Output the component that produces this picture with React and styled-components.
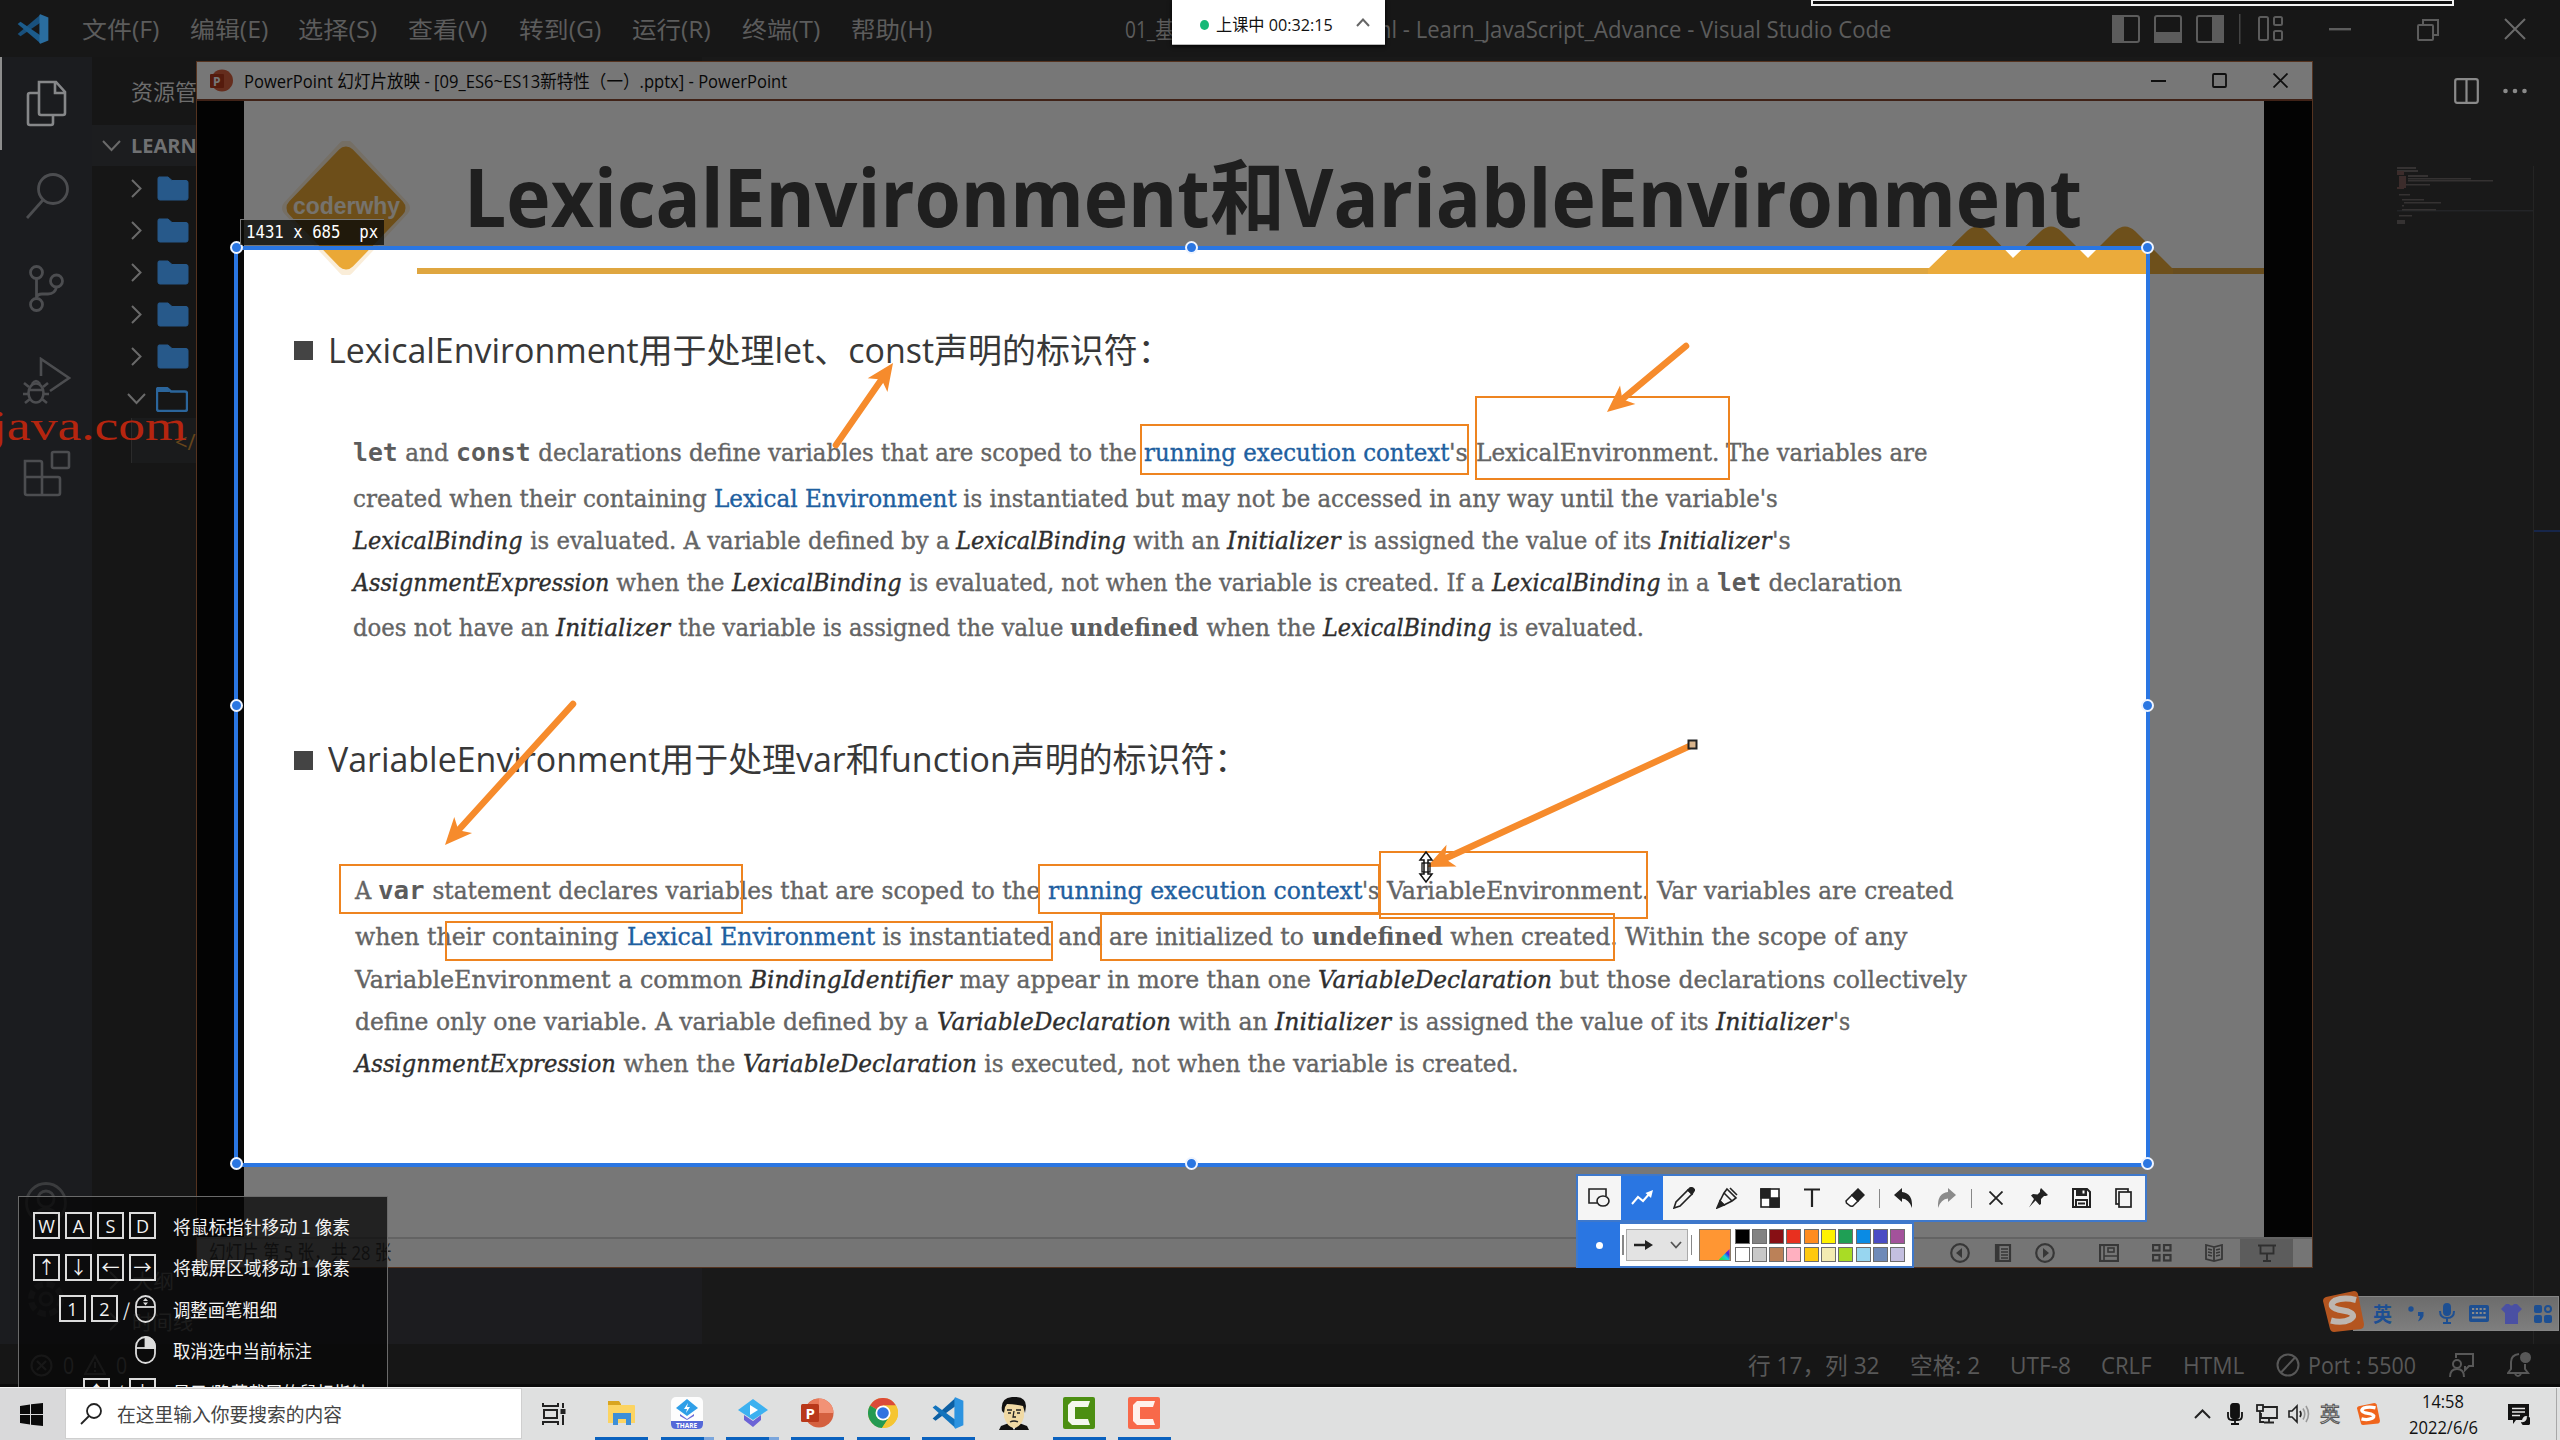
import React, { useLayoutEffect, useRef, useState } from "react";
import styled, { createGlobalStyle } from "styled-components";

const SANS = '"Open Sans", "Noto Sans CJK SC", sans-serif';
const CJK = '"Noto Sans CJK SC", "Open Sans", sans-serif';
const SERIF = '"DejaVu Serif Condensed", "DejaVu Serif", serif';
const MONO = '"DejaVu Sans Mono", monospace';
const BLUE = "#2a76e2";
const ORANGE = "#f68b2c";

const Global = createGlobalStyle`
  * { box-sizing: border-box; }
  html, body { margin: 0; padding: 0; background: #171717; }
  body { font-family: ${SANS}; overflow: hidden; }
  svg { display: block; flex: none; }
`;

/* ---------- text that fills an exact advance ---------- */
const FitBox = styled.span`
  display: block;
  flex: none;
  width: ${(p) => p.$w}px;
  margin-left: ${(p) => p.$ml || 0}px;
  white-space: pre;
`;
const FitText = styled.span`
  display: inline-block;
  transform-origin: 0 50%;
  white-space: pre;
`;
function Fit({ w, ml, children, as: Tag = FitBox }) {
  const ref = useRef(null);
  const [scale, setScale] = useState(1);
  useLayoutEffect(() => {
    setScale(w / ref.current.offsetWidth);
  }, [w]);
  return (
    <Tag $w={w} $ml={ml}>
      <FitText ref={ref} style={{ transform: `scaleX(${scale})` }}>{children}</FitText>
    </Tag>
  );
}

const Slot = styled.span`
  display: flex;
  flex: none;
  margin-left: ${(p) => p.$ml || 0}px;
  margin-top: ${(p) => p.$mt || 0}px;
`;
function Icon({ w, h, vb, children, ml, mt, ...rest }) {
  return (
    <Slot $ml={ml} $mt={mt}>
      <svg width={w} height={h} viewBox={vb || `0 0 ${w} ${h}`} fill="none" {...rest}>{children}</svg>
    </Slot>
  );
}

const Desktop = styled.div`
  position: relative;
  width: 2560px;
  height: 1440px;
  overflow: hidden;
  display: flex;
  flex-direction: column;
`;

/* ---------- editor window ---------- */
const TitleBar = styled.header`
  height: 57px;
  flex: none;
  background: #171717;
  color: #5c5c5c;
  font-size: 23px;
  line-height: 60px;
  display: flex;
  align-items: center;
  padding-left: 17px;
`;
const Body = styled.div`
  height: 1287px;
  flex: none;
  display: flex;
`;
const ActivityBar = styled.nav`
  width: 92px;
  background: #1b1c1f;
  display: flex;
  flex-direction: column;
  color: #4c4d50;
`;
const ActivityItem = styled.div`
  height: 92.6px;
  flex: none;
  padding-left: ${(p) => p.$pl}px;
  display: flex;
  align-items: center;
  border-left: 2px solid ${(p) => (p.$active ? "#8d8d8d" : "transparent")};
  color: ${(p) => (p.$active ? "#868789" : "#4c4d50")};
`;
const Sidebar = styled.aside`
  width: 610px;
  background: #161616;
  color: #6d6d6d;
  display: flex;
  flex-direction: column;
`;
const SideTitle = styled.div`
  height: 68px;
  padding-left: 39px;
  font-size: 22px;
  line-height: 68px;
`;
const SideSection = styled.div`
  height: 41px;
  background: #1c1d1f;
  display: flex;
  align-items: center;
  padding-left: 10px;
  font-size: 20px;
  line-height: 44px;
  font-weight: 700;
  color: #707173;
`;
const Tree = styled.div`
  height: 252px;
  flex: none;
  padding-top: 1px;
`;
const TreeRow = styled.div`
  height: 42.2px;
  display: flex;
  align-items: center;
  padding-left: 39px;
`;
const FileRow = styled.div`
  height: 45px;
  flex: none;
  background: #1a1b1c;
  margin-left: 39px;
  border-left: 1px solid #2b2b2b;
  padding-left: 43px;
  font-size: 22px;
  line-height: 47px;
  color: #66451b;
`;
const SideFill = styled.div`
  flex: 1;
  background: linear-gradient(to right, #161616 105px, #1c1c1f 106px);
`;
const Outline = styled.div`
  height: 84px;
  flex: none;
  background: #1c1c1f;
  color: #5e5e5e;
  font-size: 20px;
`;
const OutlineRow = styled.div`
  height: 41px;
  display: flex;
  align-items: center;
  padding-left: 17px;
`;
const Editor = styled.main`
  flex: 1;
  background: #191919;
  display: flex;
  flex-direction: column;
`;
const EditorTabs = styled.div`
  height: 109px;
  display: flex;
  justify-content: flex-end;
  padding: 21px 33px 0 0;
  color: #8a8a8a;
`;
const EditorArea = styled.div`
  flex: 1;
  display: flex;
  justify-content: flex-end;
`;
const Ruler = styled.div`
  width: 27px;
  border-left: 1px solid #242424;
  padding-top: 364px;
`;
const RulerMark = styled.div`
  height: 2px;
  background: #17264a;
`;
const StatusBar = styled.footer`
  height: 43px;
  flex: none;
  background: #161616;
  border-bottom: 3px solid #0b0b0b;
  color: #585858;
  font-size: 23px;
  line-height: 45px;
  display: flex;
  align-items: center;
  padding: 2px 0 0 30px;
`;
const Watermark = styled.div`
  position: absolute;
  left: -8px;
  top: 402px;
  font-family: "Liberation Serif", serif;
  font-size: 42px;
  line-height: 48px;
  color: #b5250f;
`;

/* ---------- slide show window ---------- */
const Show = styled.section`
  position: absolute;
  left: 196px;
  top: 61px;
  width: 2117px;
  height: 1207px;
  border: 1px solid #55331f;
  overflow: hidden;
  display: flex;
  flex-direction: column;
  background: #000;
`;
const ShowTitle = styled.div`
  height: 39px;
  flex: none;
  background: #fff;
  border-bottom: 2px solid #8a4a32;
  display: flex;
  align-items: center;
  padding-left: 13px;
  font-size: 18px;
  line-height: 38px;
  color: #111;
`;
const Stage = styled.div`
  height: 1136px;
  flex: none;
  display: flex;
  padding-left: 47px;
  background: #080808;
`;
const Slide = styled.article`
  position: relative;
  width: 2020px;
  background: #fff;
  color: #3b3b3b;
`;
const SlideHead = styled.div`
  height: 223.5px;
  display: flex;
  padding: 40.4px 0 0 38px;
`;
const SlideTitle = styled.h1`
  margin: 0 0 0 52px;
  font-size: 81px;
  line-height: 110px;
  font-weight: 700;
  color: #434343;
`;
const LogoBox = styled.div`
  position: relative;
  width: 130px;
  height: 134px;
`;
const LogoText = styled.div`
  position: absolute;
  left: 11px;
  top: 50px;
  font: 700 24px/30px "Liberation Sans", sans-serif;
  color: #fdf6ea;
`;
const Decor = styled.div`
  position: absolute;
  left: 173px;
  top: 122px;
`;
const Heading = styled.h2`
  margin: ${(p) => p.$mt || 0}px 0 0 49.5px;
  height: 50px;
  font-size: 34px;
  line-height: 50px;
  font-weight: 400;
  display: flex;
  align-items: center;
  color: #383838;
`;
const Bullet = styled.span`
  width: 19px;
  height: 19px;
  margin: 2px 15.5px 0 0;
  background: #444;
`;
const Para = styled.div`
  margin: ${(p) => p.$mt}px 0 0 ${(p) => p.$ml}px;
  font-family: ${SERIF};
  font-stretch: condensed;
  font-size: 25px;
  line-height: 40px;
  color: #646464;
  -webkit-text-stroke: 0.35px currentColor;
`;
const Line = styled.div`
  height: ${(p) => p.$h}px;
  display: flex;
  align-items: baseline;
`;
const Seg = styled(FitBox)``;
const Link = styled(FitBox)`color: #1f5f9f;`;
const Em = styled(FitBox)`font-style: italic; color: #2e2e2e;`;
const Strong = styled(FitBox)`font-weight: 700; color: #5c5c5c; -webkit-text-stroke: 0;`;
const Code = styled(FitBox)`font-family: ${MONO}; font-weight: 700; color: #5c5c5c; -webkit-text-stroke: 0;`;
const ShowStatus = styled.div`
  flex: 1;
  background: #fbfbfb;
  border-top: 2px solid #d4d4d4;
  color: #555;
  display: flex;
  align-items: center;
  font-size: 20px;
  line-height: 28px;
  padding-left: 12px;
`;
const ShowActive = styled.span`
  display: flex;
  align-items: center;
  justify-content: center;
  align-self: stretch;
  width: 53px;
  margin-left: 17px;
  background: #c6c6c6;
`;
const Dim = styled.div`
  position: absolute;
  left: 39px;
  top: 185px;
  width: 1912px;
  height: 918px;
  box-shadow: 0 0 0 3000px rgba(0, 0, 0, 0.535);
`;

/* ---------- capture overlay ---------- */
const Selection = styled.div`
  position: absolute;
  left: 234px;
  top: 246px;
  width: 1916px;
  height: 921px;
  border: 4px solid ${BLUE};
`;
const Handle = styled.i`
  position: absolute;
  left: ${(p) => p.$x - 6.5}px;
  top: ${(p) => p.$y - 6.5}px;
  width: 13px;
  height: 13px;
  border-radius: 50%;
  border: 2px solid #eef4ff;
  background: ${BLUE};
`;
const SizeTag = styled.div`
  position: absolute;
  left: 240px;
  top: 219px;
  width: 144px;
  height: 26px;
  background: rgba(12, 12, 8, 0.8);
  border-left: 1px solid #777;
  border-top: 1px solid #777;
  color: #fff;
  font: 17px/24px "DejaVu Sans Mono", monospace;
  padding-left: 5px;
`;
const Frame = styled.div`
  position: absolute;
  left: ${(p) => p.$b[0]}px;
  top: ${(p) => p.$b[1]}px;
  width: ${(p) => p.$b[2] - p.$b[0]}px;
  height: ${(p) => p.$b[3] - p.$b[1]}px;
  border: 2px solid #ee8420;
`;
const Ink = styled.svg`
  position: absolute;
  left: 0;
  top: 0;
`;
const Tools = styled.div`
  position: absolute;
  left: 1576px;
  top: 1174px;
  height: 48px;
  width: 571px;
  background: #f5f5f5;
  border: 2px solid #3e78cb;
  display: flex;
`;
const Tool = styled.span`
  width: 42.6px;
  height: 100%;
  display: flex;
  align-items: center;
  justify-content: center;
  background: ${(p) => (p.$active ? BLUE : "transparent")};
`;
const Sep = styled.span`
  width: 1.5px;
  height: ${(p) => p.$h || 19}px;
  align-self: center;
  margin: 0 ${(p) => p.$m || 2.6}px;
  background: #888;
`;
const Options = styled.div`
  position: absolute;
  left: 1576px;
  top: 1222px;
  width: 338px;
  height: 46px;
  background: #fff;
  border: 2px solid #3e78cb;
  display: flex;
  align-items: center;
`;
const SizeDot = styled.span`
  width: 42px;
  height: 46px;
  flex: none;
  background: ${BLUE};
  display: flex;
  align-items: center;
  justify-content: center;
  &::after { content: ""; width: 7px; height: 7px; border-radius: 50%; background: #fff; }
`;
const Drop = styled.span`
  width: 62px;
  height: 32px;
  flex: none;
  border: 1px solid #aaa;
  background: #e3e3e3;
  display: flex;
  align-items: center;
  justify-content: space-between;
  padding: 0 5px 0 7px;
`;
const Current = styled.span`
  width: 32px;
  height: 32px;
  flex: none;
  margin: 0 4px 0 4px;
  border: 1px solid #8a7a66;
  background: #ff9633;
  display: flex;
  align-items: flex-end;
  justify-content: flex-end;
  &::after {
    content: "";
    width: 11px;
    height: 11px;
    clip-path: polygon(100% 0, 100% 100%, 0 100%);
    background: linear-gradient(45deg, #2de04a 15%, #15d0e0 45%, #3a2be0 68%, #c020c0);
  }
`;
const Palette = styled.span`
  display: grid;
  grid-template-columns: repeat(10, 15px);
  grid-auto-rows: 15px;
  gap: 3px 2.3px;
`;
const Swatch = styled.i`
  background: ${(p) => p.$c};
  border: 1.5px solid #6d6d6d;
`;
const Tips = styled.div`
  position: absolute;
  left: 18px;
  top: 1196px;
  width: 370px;
  height: 191px;
  overflow: hidden;
  background: rgba(8, 8, 8, 0.76);
  border: 1px solid #6a6a6a;
  border-bottom: 0;
  padding-top: 8px;
  color: #f2f2f2;
  font-family: ${CJK};
  font-size: 18px;
`;
const Tip = styled.div`
  height: 41.5px;
  display: grid;
  grid-template-columns: 137px auto;
  column-gap: 16.5px;
  align-items: center;
  line-height: 40px;
`;
const Keys = styled.span`
  display: flex;
  justify-content: flex-end;
  align-items: center;
  gap: ${(p) => p.$gap || 5}px;
`;
const Key = styled.kbd`
  width: 27px;
  height: 27px;
  border: 2px solid #dcdcdc;
  display: flex;
  align-items: center;
  justify-content: center;
  font: 18px/22px ${SANS};
`;
const Pill = styled.div`
  position: absolute;
  left: 1172px;
  top: 0;
  width: 213px;
  height: 45px;
  background: #fff;
  border-bottom: 1px solid #bbb;
  box-shadow: 0 1px 4px #000;
  display: flex;
  align-items: center;
  padding: 5px 0 0 28px;
  font-size: 17px;
  line-height: 40px;
  color: #111;
`;
const GreenDot = styled.i`
  width: 9px;
  height: 10px;
  border-radius: 50%;
  background: #17b877;
`;
const Strip = styled.div`
  position: absolute;
  left: 1811px;
  top: 0;
  width: 643px;
  height: 6px;
  border: 2px solid #f2f2f2;
  border-top-width: 1px;
  background: #101010;
`;
const ImeBody = styled.div`
  position: absolute;
  left: 2353px;
  top: 1296px;
  width: 206px;
  height: 35px;
  background: linear-gradient(#6c6c6c, #7e7e7e);
  border: 1px solid #858585;
  display: flex;
  align-items: center;
  padding-left: 19px;
  color: #1d4f92;
  font: 700 20px/33px ${CJK};
`;
const ImeLogo = styled.div`
  position: absolute;
  left: 2323px;
  top: 1291px;
`;

/* ---------- task bar ---------- */
const Taskbar = styled.footer`
  position: relative;
  height: 53px;
  flex: none;
  background: #dfe0e0;
  border-top: 1px solid #f2f2f2;
  display: flex;
`;
const Start = styled.div`
  width: 65px;
  display: flex;
  align-items: center;
  padding-left: 20px;
  background: #d9d9da;
`;
const Search = styled.div`
  width: 457px;
  height: 51px;
  background: #fff;
  border: 1px solid #cfcfcf;
  display: flex;
  align-items: center;
  padding-left: 14px;
  color: #444;
  font: 19px/50px ${CJK};
`;
const TaskView = styled.div`
  width: 67px;
  display: flex;
  align-items: center;
  padding-left: 20px;
`;
const AppButton = styled.div`
  width: 65.35px;
  flex: none;
  display: flex;
  flex-direction: column;
  align-items: center;
  justify-content: flex-end;
`;
const AppIcon = styled.div`
  height: 34px;
  margin-bottom: 7px;
  display: flex;
  align-items: center;
`;
const Underline = styled.i`
  width: 53px;
  height: 3px;
  background: ${(p) =>
    p.$on === 2 ? "linear-gradient(to right, #0a62bf 43px, #7ba6dc 43px)" : p.$on ? "#0a62bf" : "transparent"};
`;
const Tray = styled.div`
  margin-left: auto;
  width: 367px;
  display: flex;
  align-items: center;
  color: #111;
`;
const TrayIme = styled.span`
  width: 21px;
  margin-left: 10px;
  font: 20px/50px ${CJK};
  color: #e6e6e6;
  -webkit-text-stroke: 1px #555;
`;
const Clock = styled.div`
  width: 70px;
  margin-left: 28px;
  display: flex;
  flex-direction: column;
  align-items: center;
  font-size: 18px;
  line-height: 26px;
`;
const ShowDesktop = styled.i`
  width: 1px;
  height: 53px;
  margin-left: 26px;
  background: #a8a8a8;
`;

/* ---------- icons ---------- */
const CodeLogo = ({ s, a, b, c, h }) => (
  <svg width={s} height={h || s} viewBox="0 0 100 100" preserveAspectRatio="none">
    <path d="M2 67 L74 2 V28 L11 74z" fill={b} />
    <path d="M2 33 L11 26 L74 72 V98z" fill={a} />
    <path d="M73 1 L98 12 V88 L73 99 Q70 98 70 94 V6 Q70 2 73 1z" fill={c} />
  </svg>
);
const Sogou = ({ w, h, c, f = "#fff" }) => (
  <svg width={w} height={h} viewBox="0 0 41 41" preserveAspectRatio="none">
    <path d="M3 6 L31 0 Q34 0 35 3 L41 33 Q41 37 38 38 L11 41 Q8 41 7 38 L0 10 Q0 7 3 6z" fill={c} />
    <path d="M33 9 Q21 6 12 9.500 Q4 15 15 18.500 L25 20.500 Q34 24 27 28.500 Q19 32.500 8 29.500" stroke={f} strokeWidth="6" fill="none" />
  </svg>
);
const Chevron = ({ dir, ml, c = "#6a6a6a" }) =>
  dir === "down" ? (
    <Icon w={19} h={12} ml={ml} stroke={c} strokeWidth="2"><path d="M1 1 L9.500 10 L18 1" /></Icon>
  ) : (
    <Icon w={11} h={19} ml={ml} stroke={c} strokeWidth="2"><path d="M1 1 L9.500 9.500 L1 18" /></Icon>
  );
const Folder = ({ open, ml }) => (
  <Icon w={32} h={25} ml={ml}>
    <path d="M2 1 H11 L15 4.500 H29 Q31 4.500 31 6.500 V22 Q31 24 29 24 H3 Q1 24 1 22 V3 Q1 1 2 1z"
      fill={open ? "#161616" : "#27598a"} stroke={open ? "#2b659b" : "#27598a"} strokeWidth={open ? 2.4 : 1} />
    {open && <path d="M1 3 Q1 1 2 1 H11 L14 5 H1z" fill="#2b659b" />}
  </Icon>
);

const menus = [
  ["文件(F)", 77, 33], ["编辑(E)", 78, 31], ["选择(S)", 79, 30], ["查看(V)", 79, 31],
  ["转到(G)", 82, 32], ["运行(R)", 79, 31], ["终端(T)", 78, 31], ["帮助(H)", 82, 31],
];

const kinds = { t: Seg, a: Link, i: Em, b: Strong, c: Code };
const para1 = [
  [46, 353, [["c", "let", 397.5], ["t", " and ", 456], ["c", "const", 530.5], ["t", " declarations define variables that are scoped to the ", 1143.5], ["a", "running execution context", 1449], ["t", "'s ", 1475.5], ["t", "LexicalEnvironment. ", 1726], ["t", "The variables are", 1927]]],
  [42, 353, [["t", "created when their containing ", 713.5], ["a", "Lexical Environment", 956], ["t", " is instantiated but may not be accessed in any way until the variable's", 1778]]],
  [41.5, 353, [["i", "LexicalBinding", 522.5], ["t", " is evaluated. A variable defined by a ", 956], ["i", "LexicalBinding", 1126], ["t", " with an ", 1227], ["i", "Initializer", 1341], ["t", " is assigned the value of its ", 1659], ["i", "Initializer", 1772], ["t", "'s", 1791]]],
  [45.7, 353, [["i", "AssignmentExpression", 609], ["t", " when the ", 732], ["i", "LexicalBinding", 901.5], ["t", " is evaluated, not when the variable is created. If a ", 1491.5], ["i", "LexicalBinding", 1660], ["t", " in a ", 1717], ["c", "let", 1761], ["t", " declaration", 1901.5]]],
  [46, 353, [["t", "does not have an ", 556], ["i", "Initializer", 670.5], ["t", " the variable is assigned the value ", 1070], ["b", "undefined", 1199], ["t", " when the ", 1323], ["i", "LexicalBinding", 1491.5], ["t", " is evaluated.", 1643]]],
];
const para2 = [
  [46.5, 355, [["t", "A ", 378], ["c", "var", 424.5], ["t", " statement declares variables that are scoped to the ", 1047.5], ["a", "running execution context", 1362], ["t", "'s ", 1386.5], ["t", "VariableEnvironment. ", 1657], ["t", "Var variables are created", 1954]]],
  [42.7, 355, [["t", "when their containing ", 626.5], ["a", "Lexical Environment", 874.5], ["t", " is instantiated and ", 1109], ["t", "are initialized to ", 1311.5], ["b", "undefined", 1443], ["t", " when created. ", 1625], ["t", "Within the scope of any", 1907]]],
  [42.3, 355, [["t", "VariableEnvironment a common ", 750], ["i", "BindingIdentifier", 951.5], ["t", " may appear in more than one ", 1317.5], ["i", "VariableDeclaration", 1552], ["t", " but those declarations collectively", 1967]]],
  [42, 355, [["t", "define only one variable. A variable defined by a ", 936.5], ["i", "VariableDeclaration", 1171], ["t", " with an ", 1275], ["i", "Initializer", 1391.5], ["t", " is assigned the value of its ", 1716], ["i", "Initializer", 1832.5], ["t", "'s", 1850]]],
  [42, 355, [["i", "AssignmentExpression", 615.5], ["t", " when the ", 742.5], ["i", "VariableDeclaration", 977], ["t", " is executed, not when the variable is created.", 1519]]],
];
function Lines({ lines }) {
  return lines.map(([h, start, segs], n) => {
    let x = start;
    return (
      <Line key={n} $h={h}>
        {segs.map(([k, text, end], i) => {
          const w = end - x;
          x = end;
          return <Fit key={i} as={kinds[k]} w={w}>{text}</Fit>;
        })}
      </Line>
    );
  });
}

const frames = [
  [1140, 424, 1469, 475], [1475, 396, 1730, 480], [339, 864, 743, 914], [1038, 864, 1380, 914],
  [1379, 851, 1648, 919], [445, 921, 1053, 961], [1100, 913, 1615, 961],
];
const arrows = [
  [836, 445, 893, 363], [1686, 346, 1607, 412], [573, 704, 445, 845], [1692, 745, 1427, 867],
];
const handles = [
  [236.5, 247.5], [1191.5, 247.5], [2147, 247.5], [236.5, 705.5], [2147, 705.5], [236.5, 1163.5], [1191.5, 1163.5], [2147, 1163.5],
];
function Arrow({ p: [x1, y1, x2, y2] }) {
  const d = Math.hypot(x2 - x1, y2 - y1);
  const a = (Math.atan2(y2 - y1, x2 - x1) * 180) / Math.PI;
  return (
    <g transform={`translate(${x1} ${y1}) rotate(${a})`}>
      <path d={`M0 0 H${d - 16}`} stroke={ORANGE} strokeWidth="6.500" strokeLinecap="round" />
      <path d={`M${d} 0 L${d - 27} -12 L${d - 20} 0 L${d - 27} 12z`} fill={ORANGE} />
    </g>
  );
}
const palette = [
  "#000", "#828282", "#870f14", "#e8301f", "#ff8c1e", "#fff200", "#1f9f55", "#0a8be4", "#4a4cc4", "#a3529b",
  "#fff", "#c8c8c8", "#bb8158", "#ffb0c0", "#ffc90e", "#f3ebb2", "#a9dc25", "#98d6f0", "#6f8ab8", "#c4bfe0",
];

const Mouse = ({ kind }) => (
  <svg width="21" height="28" viewBox="0 0 21 28" fill="none" stroke="#dcdcdc" strokeWidth="1.8">
    <rect x="1" y="1" width="19" height="26" rx="9.500" />
    <path d="M1 12 H20" />
    {kind === "wheel" ? (
      <path d="M10.500 3 L13 6 H8z M10.500 10.500 L8 7.500 H13z" fill="#dcdcdc" stroke="none" />
    ) : (
      <path d="M10.500 1 V12 H20 V10 Q19 2 10.500 1z" fill="#dcdcdc" />
    )}
  </svg>
);

function EditorWindow() {
  return (
    <>
      <TitleBar>
        <CodeLogo s={32} h={30} a="#1c5c8c" b="#19507c" c="#2a6d9f" />
        {menus.map(([t, w, ml]) => <Fit key={t} w={w} ml={ml}>{t}</Fit>)}
        <Fit w={49} ml={192}>01_基</Fit>
        <Fit w={520} ml={197}>ml - Learn_JavaScript_Advance - Visual Studio Code</Fit>
        <Icon w={28} h={28} ml={221} stroke="#5c5c5c" strokeWidth="2"><rect x="1" y="1" width="26" height="26" rx="2" /><rect x="1" y="1" width="10" height="26" fill="#5c5c5c" /></Icon>
        <Icon w={28} h={28} ml={14} stroke="#5c5c5c" strokeWidth="2"><rect x="1" y="1" width="26" height="26" rx="2" /><rect x="1" y="18" width="26" height="9" fill="#5c5c5c" /></Icon>
        <Icon w={28} h={28} ml={14} stroke="#5c5c5c" strokeWidth="2"><rect x="1" y="1" width="26" height="26" rx="2" /><rect x="17" y="1" width="10" height="26" fill="#5c5c5c" /></Icon>
        <Icon w={2} h={30} ml={15}><rect width="1.500" height="30" fill="#444" /></Icon>
        <Icon w={26} h={25} ml={17} stroke="#5c5c5c" strokeWidth="2"><rect x="1" y="1" width="9" height="23" rx="1.500" /><rect x="16" y="1" width="8" height="8" rx="1.500" /><rect x="16" y="15" width="8" height="9" rx="1.500" /></Icon>
        <Icon w={22} h={3} ml={45} mt={2}><rect width="22" height="2.400" fill="#5c5c5c" /></Icon>
        <Icon w={22} h={22} ml={66} mt={3} stroke="#5c5c5c" strokeWidth="2"><rect x="1" y="6" width="15" height="15" rx="1" /><path d="M6 6 V1 H21 V16 H16" /></Icon>
        <Icon w={22} h={22} ml={65} stroke="#6a6a6a" strokeWidth="2"><path d="M1 1 L21 21 M21 1 L1 21" /></Icon>
      </TitleBar>
      <Body>
        <ActivityBar>
          <ActivityItem $active $pl={24}>
            <svg width="41" height="47" viewBox="0 0 41 47" fill="none" stroke="currentColor" strokeWidth="2.600"><path d="M13 2 H30 L39 12 V33 Q39 35 37 35 H15 Q13 35 13 33z M29 2 V13 H39 M13 13 H4 Q2 13 2 15 V43 Q2 45 4 45 H25 Q27 45 27 43 V35" /></svg>
          </ActivityItem>
          <ActivityItem $pl={24}>
            <svg width="44" height="46" viewBox="0 0 44 46" fill="none" stroke="currentColor" strokeWidth="2.800"><circle cx="27" cy="16" r="14.500" /><path d="M17 27 L1 45" /></svg>
          </ActivityItem>
          <ActivityItem $pl={26}>
            <svg width="37" height="47" viewBox="0 0 37 47" fill="none" stroke="currentColor" strokeWidth="2.800"><circle cx="8.500" cy="7.500" r="6" /><circle cx="8.500" cy="39.500" r="6" /><circle cx="28.500" cy="16" r="6" /><path d="M8.500 13.500 V33.500 M28.500 22 Q27 29 20 29 H14 Q9 29 8.500 33" /></svg>
          </ActivityItem>
          <ActivityItem $pl={21}>
            <svg width="48" height="48" viewBox="0 0 48 48" fill="none" stroke="currentColor" strokeWidth="2.600"><path d="M18 19 V2 L46 21 L27 34" /><ellipse cx="13" cy="36" rx="7.500" ry="9.500" /><path d="M6 33 H20 M9 27 Q13 21 17 27 M6 30 L1 26 M20 30 L25 26 M5 37 H0 M21 37 H26 M7 42 L2 46 M19 42 L24 46" /></svg>
          </ActivityItem>
          <ActivityItem $pl={21}>
            <svg width="48" height="47" viewBox="0 0 48 47" fill="none" stroke="currentColor" strokeWidth="2.600"><path d="M2 11 H17 Q19 11 19 13 V27 H35 Q37 27 37 29 V43 Q37 45 35 45 H4 Q2 45 2 43z M2 27 H19 V45" /><rect x="29" y="2" width="17" height="16" rx="1.500" /></svg>
          </ActivityItem>
          <Slot $ml={25} $mt={662}>
            <svg width="42" height="42" viewBox="0 0 42 42" fill="none" stroke="#3b3c3e" strokeWidth="2.800"><circle cx="21" cy="21" r="19.500" /><circle cx="21" cy="17" r="8" /><path d="M9 35 Q12 27 21 27 Q30 27 33 35" /></svg>
          </Slot>
          <Slot $ml={26} $mt={55}>
            <svg width="40" height="40" viewBox="0 0 40 40" fill="none" stroke="#303133" strokeWidth="3"><circle cx="20" cy="20" r="6" /><circle cx="20" cy="20" r="15" strokeDasharray="8 3.800" strokeWidth="6" /></svg>
          </Slot>
        </ActivityBar>
        <Sidebar>
          <SideTitle>资源管</SideTitle>
          <SideSection><Chevron dir="down" /><Fit w={66} ml={10}>LEARN</Fit></SideSection>
          <Tree>
            {[0, 1, 2, 3, 4].map((i) => <TreeRow key={i}><Chevron /><Folder ml={15} /></TreeRow>)}
            <TreeRow><Chevron dir="down" ml={-4} /><Folder open ml={10} /></TreeRow>
          </Tree>
          <FileRow>&lt;/</FileRow>
          <SideFill />
          <Outline>
            <OutlineRow><Chevron c="#555" /><Fit w={42} ml={12}>大纲</Fit></OutlineRow>
            <OutlineRow><Chevron c="#555" /><Fit w={61} ml={12}>时间线</Fit></OutlineRow>
          </Outline>
        </Sidebar>
        <Editor>
          <EditorTabs>
            <Icon w={25} h={26} stroke="#8a8a8a" strokeWidth="2.200"><rect x="1.200" y="1.200" width="22.600" height="23.600" rx="2" /><path d="M12.500 1 V25" /></Icon>
            <Icon w={24} h={26} ml={24}><circle cx="2.500" cy="13" r="2.300" fill="#8a8a8a" /><circle cx="12" cy="13" r="2.300" fill="#8a8a8a" /><circle cx="21.500" cy="13" r="2.300" fill="#8a8a8a" /></Icon>
          </EditorTabs>
          <EditorArea>
            <svg width="136" height="62" viewBox="0 0 136 62">
              <rect x="0" y="44" width="136" height="1.500" fill="#232427" />
              <g fill="#353232">
                <rect x="0" y="1" width="19" height="2" /><rect x="0" y="4" width="21" height="2" />
                <rect x="11" y="9" width="20" height="2" /><rect x="11" y="12" width="63" height="1.500" /><rect x="11" y="14" width="85" height="1.500" /><rect x="8" y="18" width="25" height="1.500" />
                <rect x="2" y="28" width="11" height="1.500" /><rect x="5" y="33" width="22" height="1.500" /><rect x="7" y="36" width="37" height="1.500" /><rect x="5" y="39" width="2" height="1.500" />
                <rect x="5" y="43" width="34" height="1.500" /><rect x="2" y="49" width="13" height="1.500" /><rect x="0" y="54" width="8" height="4" />
              </g>
              <g fill="#3c2c2b"><rect x="0" y="5" width="7" height="4" /><rect x="2" y="10" width="7" height="12" /><rect x="0" y="21" width="7" height="2" /></g>
            </svg>
            <Ruler><RulerMark /></Ruler>
          </EditorArea>
        </Editor>
      </Body>
      <StatusBar>
        <Icon w={23} h={23} stroke="#4a4a4a" strokeWidth="2"><circle cx="11.500" cy="11.500" r="10" /><path d="M7 7 L16 16 M16 7 L7 16" /></Icon>
        <Fit w={11} ml={10}>0</Fit>
        <Icon w={22} h={22} ml={10} stroke="#4a4a4a" strokeWidth="2"><path d="M11 2 L21 20 H1z M11 8 V14 M11 16 V18" /></Icon>
        <Fit w={11} ml={10}>0</Fit>
        <Fit w={132} ml={1621}>行 17，列 32</Fit>
        <Fit w={70} ml={30}>空格: 2</Fit>
        <Fit w={61} ml={30}>UTF-8</Fit>
        <Fit w={51} ml={30}>CRLF</Fit>
        <Fit w={61} ml={31}>HTML</Fit>
        <Icon w={24} h={24} ml={32} stroke="#585858" strokeWidth="2"><circle cx="12" cy="12" r="10.500" /><path d="M19 4.500 L5 19.500" /></Icon>
        <Fit w={108} ml={8}>Port : 5500</Fit>
        <Icon w={25} h={25} ml={33} stroke="#585858" strokeWidth="2"><path d="M7 5 V1 H24 V13 H20 L16 17 V13" /><circle cx="8" cy="11" r="4" /><path d="M1 24 Q1 16 8 16 Q15 16 15 24" /></Icon>
        <Icon w={24} h={26} ml={33} stroke="#585858" strokeWidth="2"><path d="M12 2 Q4 3 4 10 V17 L1 21 H21 L18 17 V12 M8 22 Q11 26 14 22" /><circle cx="18.500" cy="5.500" r="4.500" fill="#585858" /></Icon>
      </StatusBar>
    </>
  );
}

const ST = { stroke: "#777", strokeWidth: 2.2 };
function SlideShow() {
  return (
    <Show>
      <ShowTitle>
        <Icon w={23} h={23}>
          <circle cx="12" cy="11.500" r="11" fill="#d9603f" /><rect x="0" y="5" width="14" height="14" rx="1" fill="#b63a1c" />
          <text x="3" y="16.500" fontSize="12" fontWeight="700" fill="#fff" fontFamily="Open Sans, sans-serif">P</text>
        </Icon>
        <Fit w={543} ml={11}>PowerPoint 幻灯片放映 - [09_ES6~ES13新特性（一）.pptx] - PowerPoint</Fit>
        <Icon w={15} h={2} ml={1364}><rect width="15" height="2" fill="#222" /></Icon>
        <Icon w={15} h={15} ml={46} stroke="#222" strokeWidth="1.800"><rect x="1" y="1" width="13" height="13" rx="1" /></Icon>
        <Icon w={15} h={15} ml={46} stroke="#222" strokeWidth="1.800"><path d="M.5 .5 L14.500 14.500 M14.500 .5 L.5 14.500" /></Icon>
      </ShowTitle>
      <Stage>
        <Slide>
          <Decor>
            <svg width="1847" height="52" viewBox="0 0 1847 52">
              <rect x="0" y="45" width="1847" height="6" fill="#dfa640" />
              <path d="M1511 46 L1550 8 Q1560 -1 1570 8 L1596 35 L1624 8 Q1634 -1 1644 8 L1671 35 L1698 8 Q1708 -1 1718 8 L1756 46 V51 H1511z" fill="#ebab3b" />
            </svg>
          </Decor>
          <SlideHead>
            <LogoBox>
              <svg width="130" height="134" viewBox="0 0 130 134">
                <path d="M64 6 L120 66 L64 126 L8 66z" fill="#f7dcb3" stroke="#f7dcb3" strokeWidth="16" strokeLinejoin="round" opacity=".5" transform="translate(0 1)" />
                <path d="M64 15 L114 67 L64 119 L14 67z" fill="#eaa836" stroke="#eaa836" strokeWidth="19" strokeLinejoin="round" />
              </svg>
              <LogoText><Fit w={107}>coderwhy</Fit></LogoText>
            </LogoBox>
            <SlideTitle><Fit w={1618}>LexicalEnvironment和VariableEnvironment</Fit></SlideTitle>
          </SlideHead>
          <Heading><Bullet /><Fit w={844}>LexicalEnvironment用于处理let、const声明的标识符：</Fit></Heading>
          <Para $mt={58.8} $ml={109}><Lines lines={para1} /></Para>
          <Heading $mt={79.8}><Bullet /><Fit w={920}>VariableEnvironment用于处理var和function声明的标识符：</Fit></Heading>
          <Para $mt={86.5} $ml={111}><Lines lines={para2} /></Para>
        </Slide>
      </Stage>
      <ShowStatus>
        <Fit w={182}>幻灯片 第 5 张，共 28 张</Fit>
        <Icon w={24} h={20} ml={1557} {...ST}><circle cx="12" cy="10" r="8.800" /><path d="M14 5 L8 10 L14 15z" fill="#777" strokeWidth="0" /></Icon>
        <Icon w={18} h={18} ml={22} {...ST}><rect x="2" y="1" width="14" height="16" /><path d="M4 1 V17" strokeWidth="3" /><path d="M7 5 H14 M7 8 H14 M7 11 H14 M7 14 H14" strokeWidth="1.400" /></Icon>
        <Icon w={24} h={20} ml={21} {...ST}><circle cx="12" cy="10" r="8.800" /><path d="M10 5 L16 10 L10 15z" fill="#777" strokeWidth="0" /></Icon>
        <Icon w={20} h={18} ml={42} {...ST}><rect x="1" y="1" width="18" height="16" /><path d="M5 1 V17 M5 12 H19" strokeWidth="1.600" /><rect x="9" y="4" width="6" height="4" strokeWidth="1.600" /></Icon>
        <Icon w={20} h={18} ml={33} {...ST}><rect x="1" y="1" width="6.500" height="5.500" /><rect x="12" y="1" width="6.500" height="5.500" /><rect x="1" y="11" width="6.500" height="5.500" /><rect x="12" y="11" width="6.500" height="5.500" /></Icon>
        <Icon w={18} h={18} ml={33} {...ST}><path d="M9 3 L1 1 V15 L9 17 L17 15 V1z M9 3 V17" strokeWidth="1.800" /><path d="M3 5 L7 6 M3 8 L7 9 M3 11 L7 12 M11 6 L15 5 M11 9 L15 8 M11 12 L15 11" strokeWidth="1.400" /></Icon>
        <ShowActive>
          <svg width="18" height="18" viewBox="0 0 18 18" fill="none" stroke="#666" strokeWidth="1.900"><path d="M0 1.500 H18 M2.500 2 V9.500 H15.500 V2 M9 10 V16 M5 17 H13" /></svg>
        </ShowActive>
      </ShowStatus>
      <Dim />
    </Show>
  );
}

const K = "#222";
function Capture() {
  return (
    <>
      {frames.map((b, i) => <Frame key={i} $b={b} />)}
      <Ink width="2560" height="1440" fill="none">
        {arrows.map((p, i) => <Arrow key={i} p={p} />)}
        <rect x="1688.500" y="740.500" width="8" height="8" fill="#d8b48c" stroke="#222" strokeWidth="2" />
        <path d="M1426 852 L1432 860 H1428 V874 H1432 L1426 882 L1420 874 H1424 V860 H1420z" fill="#fff" stroke="#111" strokeWidth="1.500" />
        <rect x="1422" y="863" width="8" height="9" stroke="#111" strokeWidth="1.300" />
      </Ink>
      <Selection />
      {handles.map(([x, y], i) => <Handle key={i} $x={x} $y={y} />)}
      <SizeTag><Fit w={132}>1431 x 685  px</Fit></SizeTag>
      <Tools>
        <Tool><svg width="22" height="20" viewBox="0 0 22 20" fill="none" stroke={K} strokeWidth="1.600"><path d="M9 15 H1 V1 H18 V8" /><ellipse cx="15" cy="13" rx="6" ry="5" fill="#f5f5f5" /></svg></Tool>
        <Tool $active><svg width="22" height="16" viewBox="0 0 22 16" fill="none" stroke="#fff" strokeWidth="2"><path d="M1 14 L7 7 L12 11 L19 3" /><path d="M22 0 L20 8 L14.500 3z" fill="#fff" stroke="none" /></svg></Tool>
        <Tool><svg width="22" height="22" viewBox="0 0 22 22" fill="none" stroke={K} strokeWidth="1.600"><path d="M1 21 L3 15 L15 3 L19 7 L7 19z" /><path d="M15 3 L17 1 Q20 0 21.500 3 L19 7z" fill={K} /></svg></Tool>
        <Tool><svg width="22" height="22" viewBox="0 0 22 22" fill="none" stroke={K} strokeWidth="1.600"><path d="M11 2 L20 11 L16 14 L8 18 L4 14 L8 6z M8 6 L16 14 M14 1 L21 8" /><path d="M4 14 L8 18 L1 21z" fill={K} /></svg></Tool>
        <Tool><svg width="20" height="20" viewBox="0 0 20 20" stroke={K} strokeWidth="1.600"><rect x="1" y="1" width="18" height="18" fill="#fff" /><path d="M1 1 H10 V10 H1z M10 10 H19 V19 H10z" fill={K} /></svg></Tool>
        <Tool><svg width="18" height="20" viewBox="0 0 18 20" fill="none" stroke={K} strokeWidth="2.200"><path d="M1 1.500 H17 M9 1.500 V19" /></svg></Tool>
        <Tool><svg width="20" height="20" viewBox="0 0 20 20" stroke={K} strokeWidth="1.500"><path d="M1 13 L7 7 L13 13 L8 18 Q6 19 4 17 L1.500 15z" fill="#fff" /><path d="M7 7 L13 1 L19 7 L13 13z" fill={K} /></svg></Tool>
        <Sep />
        <Tool><svg width="20" height="20" viewBox="0 0 20 20"><path d="M0 7 L8 0 V4 Q19 5 18 20 Q15 11 8 10.500 V14z" fill={K} /></svg></Tool>
        <Tool><svg width="20" height="20" viewBox="0 0 20 20"><path d="M19 7 L11 0 V4 Q0 5 1 20 Q4 11 11 10.500 V14z" fill="#8b8b8b" /></svg></Tool>
        <Sep />
        <Tool><svg width="14" height="14" viewBox="0 0 14 14" stroke={K} strokeWidth="1.800"><path d="M.5 .5 L13.500 13.500 M13.500 .5 L.5 13.500" /></svg></Tool>
        <Tool><svg width="19" height="20" viewBox="0 0 19 20" fill={K}><path d="M12 0 L19 7 L17 8 L15 8 L12 11 L12 16 L10.500 17 L6.500 12.500 L0 19.500 L5 11 L2 7.500 L4 6 L8.500 6.500 L11 4 L11 2z" /></svg></Tool>
        <Tool><svg width="19" height="20" viewBox="0 0 19 20" fill="none" stroke={K} strokeWidth="2"><path d="M1 1 H15 L18 4 V19 H1z" /><path d="M5 1 H14 V7 H5z" fill={K} /><path d="M11.500 2.500 V5.500" stroke="#fff" /><path d="M4 19 V12 H15 V19 M6 15.500 H13" /></svg></Tool>
        <Tool><svg width="17" height="20" viewBox="0 0 17 20" fill="none" stroke={K} strokeWidth="1.700"><rect x="1" y="1" width="12" height="15" /><rect x="4" y="4" width="12" height="15" fill="#f5f5f5" /></svg></Tool>
      </Tools>
      <Options>
        <SizeDot />
        <Sep $h={20} $m={2.4} />
        <Drop>
          <svg width="19" height="10" viewBox="0 0 19 10" fill={K}><path d="M0 3.800 H11 V0 L19 5 L11 10 V6.200 H0z" /></svg>
          <svg width="12" height="8" viewBox="0 0 12 8" fill="none" stroke="#555" strokeWidth="1.800"><path d="M1 1 L6 6.500 L11 1" /></svg>
        </Drop>
        <Sep $h={20} $m={2.4} />
        <Current />
        <Palette>{palette.map((c, i) => <Swatch key={i} $c={c} />)}</Palette>
      </Options>
      <Tips>
        <Tip><Keys><Key>W</Key><Key>A</Key><Key>S</Key><Key>D</Key></Keys><Fit w={177}>将鼠标指针移动 1 像素</Fit></Tip>
        <Tip><Keys><Key>↑</Key><Key>↓</Key><Key>←</Key><Key>→</Key></Keys><Fit w={177}>将截屏区域移动 1 像素</Fit></Tip>
        <Tip><Keys><Key>1</Key><Key>2</Key>/<Mouse kind="wheel" /></Keys><Fit w={104}>调整画笔粗细</Fit></Tip>
        <Tip><Keys><Mouse /></Keys><Fit w={139}>取消选中当前标注</Fit></Tip>
        <Tip><Keys $gap={6}><Key>↑</Key>/<Key>↓</Key></Keys><Fit w={195}>显示/隐藏截屏的鼠标指针</Fit></Tip>
      </Tips>
    </>
  );
}

function InputBar() {
  const c = "#1d4f92";
  return (
    <>
      <ImeBody>
        <Fit w={19}>英</Fit>
        <Icon w={16} h={16} ml={16} mt={0}><circle cx="3" cy="3" r="2.700" fill={c} /><path d="M10 6 H15.500 V10 Q14 14 10 15.500 Q12 12 12 10 H10z" fill={c} /></Icon>
        <Icon w={16} h={21} ml={15} stroke={c} strokeWidth="2"><rect x="5" y="1" width="6" height="11" rx="3" fill={c} /><path d="M1 8 Q1 15 8 15 Q15 15 15 8 M8 15 V20 M4 20 H12" /></Icon>
        <Icon w={20} h={17} ml={14}><rect width="20" height="17" rx="2" fill={c} /><path d="M3 4 H17 M3 8 H17" stroke="#8a8a8a" strokeWidth="2.200" strokeDasharray="2.200 1.600" /><path d="M3 12.500 H17" stroke="#8a8a8a" strokeWidth="2" /></Icon>
        <Icon w={21} h={20} ml={12}><path d="M5 0 H8 Q10.500 3 13 0 H16 L21 5 L17 9 V20 H4 V9 L0 5z" fill="#4a50a3" /></Icon>
        <Icon w={18} h={18} ml={12}><rect width="8" height="8" rx="2" fill={c} /><rect x="11" y="1" width="6" height="6" rx="3" stroke={c} strokeWidth="2" /><rect y="10" width="8" height="8" rx="2" fill={c} /><rect x="10" y="10" width="8" height="8" rx="2" fill={c} /></Icon>
      </ImeBody>
      <ImeLogo><Sogou w={41} h={41} c="#b4551f" f="#bdb6b0" /></ImeLogo>
    </>
  );
}

const apps = [
  [1, <svg width="29" height="26" viewBox="0 0 29 26"><path d="M1 1 H12 L14 4 V8 H1z" fill="#d9a520" /><path d="M1 5 H27 Q28 5 28 6 V23 H1z" fill="#fcd462" /><path d="M6 13 H24 V25 H19 V19 H11 V25 H6z" fill="#3d8fd8" /></svg>],
  [2, <svg width="32" height="32" viewBox="0 0 32 32"><rect width="32" height="32" rx="5" fill="#fdfdfd" /><path d="M0 24 H32 V27 Q32 32 27 32 H5 Q0 32 0 27z" fill="#5468d8" /><path d="M9 17 L16 22 L23 17 V19 L16 23 L9 19z" fill="#6a6ad8" /><path d="M16 2 L27 11 L16 19 L5 11z" fill="#2f9fe8" /><path d="M17 6 L13 12 H16 L15 16 L19 10 H16z" fill="#fff" /><text x="5" y="30.500" fontSize="6.500" fontWeight="700" fill="#fff" fontFamily="Open Sans, sans-serif">THARE</text></svg>],
  [2, <svg width="31" height="30" viewBox="0 0 31 30"><path d="M7 17 L16 23 L24 17 V22 L16 29 L7 22z" fill="#6b63d6" /><path d="M16 1 L31 12 L16 22 L1 12z" fill="#3cb1f0" /><path d="M13 7 L21 12 L13 17z" fill="#fff" /></svg>],
  [1, <svg width="33" height="30" viewBox="0 0 33 30"><circle cx="18" cy="15" r="14.500" fill="#d4603f" /><path d="M18 .5 A14.500 14.500 0 0 1 32.500 15 H18z" fill="#f29276" /><path d="M18 .5 A14.500 14.500 0 0 0 4 11 V15 H18z" fill="#e87858" /><rect x="0" y="6" width="18" height="18" rx="1.500" fill="#b9381a" /><text x="4.500" y="20.500" fontSize="15" fontWeight="700" fill="#fff" fontFamily="Open Sans, sans-serif">P</text></svg>],
  [1, <svg width="30" height="30" viewBox="0 0 30 30"><circle cx="15" cy="15" r="15" fill="#f5c532" /><path d="M15 15 L2 7.500 A15 15 0 0 1 28 7.500 H15z" fill="#db4a38" /><path d="M15 15 L2 7.500 A15 15 0 0 0 14 30 L21.500 18.500z" fill="#249a52" /><path d="M15 7.500 H28 A15 15 0 0 1 14 30 L21.500 18.700z" fill="#f5c532" /><circle cx="15" cy="15" r="7.500" fill="#fff" /><circle cx="15" cy="15" r="5.800" fill="#2f73e0" /></svg>],
  [1, <CodeLogo s={32} h={32} a="#1273bd" b="#0c5fa3" c="#2c93e0" />],
  [0, <svg width="30" height="33" viewBox="0 0 30 33"><path d="M0 33 L2 29 L10 26 H20 L28 29 L30 33z" fill="#111" /><path d="M11 26 L15 33 L19 26z" fill="#fff" /><path d="M5 9 Q15 3 25 9 V20 Q22 30 15 31 Q8 30 5 20z" fill="#f0d9a4" /><path d="M3 14 Q1 1 13 0 Q27 -1 27 9 L26 16 L24 9 Q15 7 8 7 L6 10 L5 16z" fill="#111" /><path d="M8 13 H13 M17 13 H22 M11 25 Q15 23 19 25 M15 14 L14 20 H17 M9 16 H12 M18 16 H21" stroke="#222" strokeWidth="1.300" fill="none" /></svg>],
  [1, <svg width="32" height="32" viewBox="0 0 32 32"><rect width="32" height="32" rx="2" fill="#4c8f12" /><path d="M27 4 L25 10 H12 V22 H25 L27 28 H9 L5 24 V8 L9 4z" fill="#f4f8ee" /></svg>],
  [1, <svg width="32" height="32" viewBox="0 0 32 32"><rect width="32" height="32" rx="2" fill="#f8694a" /><path d="M27 4 L25 10 H12 V22 H25 L27 28 H9 L5 24 V8 L9 4z" fill="#fff1ec" /></svg>],
];

function TaskBar() {
  return (
    <Taskbar>
      <Start><svg width="23" height="23" viewBox="0 0 23 23" fill="#0a0a0a"><path d="M0 3 L10 1.500 V11 H0z M11 1.300 L23 0 V11 H11z M0 12 H10 V21.500 L0 20z M11 12 H23 V23 L11 21.700z" /></svg></Start>
      <Search>
        <Icon w={23} h={22} stroke="#222" strokeWidth="1.800"><circle cx="14" cy="8" r="7" /><path d="M9 13 L1 21" /></Icon>
        <Fit w={225} ml={14}>在这里输入你要搜索的内容</Fit>
      </Search>
      <TaskView><svg width="24" height="22" viewBox="0 0 24 22" fill="none" stroke="#222" strokeWidth="2"><path d="M1 0 V3 H16 V0 M1 22 V19 H16 V22 M21 0 V5 M21 12 V22" /><rect x="2" y="7" width="13" height="8" /><rect x="19.500" y="7" width="3" height="3" fill="#222" /></svg></TaskView>
      {apps.map(([on, svg], i) => (
        <AppButton key={i}><AppIcon>{svg}</AppIcon><Underline $on={on} /></AppButton>
      ))}
      <Tray>
        <Icon w={17} h={10} ml={1} stroke="#222" strokeWidth="2"><path d="M1 9 L8.500 1.500 L16 9" /></Icon>
        <Icon w={16} h={22} ml={16} stroke="#111" strokeWidth="1.800"><rect x="4" y="1" width="8" height="14" rx="2" fill="#111" /><path d="M1 9 V13 Q1 17 5 17 H11 Q15 17 15 13 V9 M8 17 V21 M4 21 H12" /></Icon>
        <Icon w={22} h={20} ml={13} stroke="#222" strokeWidth="1.800"><path d="M7 3 H21 V14 H5 V9 M13 14 V18 M8 18.500 H18" /><rect x="1" y="1" width="6" height="6" /><path d="M4 7 V18 H8" /></Icon>
        <Icon w={22} h={20} ml={10} stroke="#222" strokeWidth="1.600"><path d="M1 7 H4 L9 2 V18 L4 13 H1z" /><path d="M12 7 Q14 10 12 13" /><path d="M15 4.500 Q18.500 10 15 15.500 M18 2 Q23 10 18 18" stroke="#999" /></Icon>
        <TrayIme>英</TrayIme>
        <Slot $ml={16}><Sogou w={23} h={22} c="#f0651c" /></Slot>
        <Clock><Fit w={42}>14:58</Fit><Fit w={69}>2022/6/6</Fit></Clock>
        <Icon w={23} h={22} ml={29}><path d="M1 1 H22 V14 Q17 11 15 17 H9 L6 21 V17 H1z" fill="#111" /><path d="M5 5.500 H18 M5 9 H18 M5 12.500 H13" stroke="#e6e6e6" strokeWidth="1.600" /><path d="M20 13 A5 5 0 1 1 14 19 Q20 20 20 13z" fill="#111" /></Icon>
        <ShowDesktop />
      </Tray>
    </Taskbar>
  );
}

export default function App() {
  return (
    <Desktop>
      <Global />
      <EditorWindow />
      <TaskBar />
      <Watermark><Fit w={195}>java.com</Fit></Watermark>
      <SlideShow />
      <Capture />
      <InputBar />
      <Pill>
        <GreenDot />
        <Fit w={117} ml={7}>上课中 00:32:15</Fit>
        <Icon w={14} h={9} ml={23} mt={-5} stroke="#666" strokeWidth="2"><path d="M1 8 L7 1.500 L13 8" /></Icon>
      </Pill>
      <Strip />
    </Desktop>
  );
}
